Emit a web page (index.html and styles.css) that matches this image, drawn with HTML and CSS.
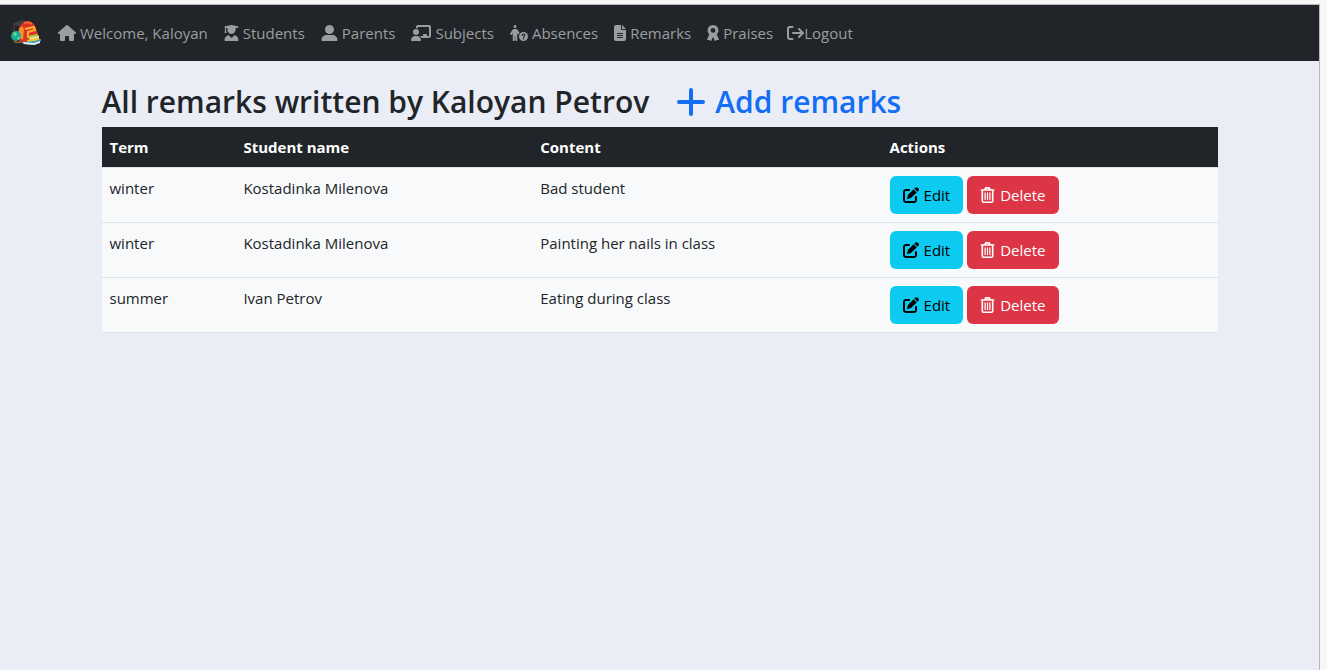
FILE: index.html
```html
<!DOCTYPE html>
<html lang="en">
<head>
<meta charset="utf-8">
<meta name="viewport" content="width=device-width, initial-scale=1">
<title>Remarks</title>
<link rel="stylesheet" href="styles.css">
</head>
<body>
<svg class="sprite" aria-hidden="true">
  <symbol id="edit" viewBox="0 0 512 512"><path d="M471.6 21.7c-21.9-21.9-57.3-21.9-79.2 0L362.3 51.7l97.9 97.9 30.1-30.1c21.9-21.9 21.9-57.3 0-79.2L471.6 21.7zm-299.2 220c-6.1 6.1-10.8 13.6-13.5 21.9l-29.6 88.8c-2.9 8.6-.6 18.1 5.8 24.6s15.9 8.7 24.6 5.8l88.8-29.6c8.2-2.7 15.7-7.4 21.9-13.5L437.7 172.3 339.7 74.3 172.4 241.7zM96 64C43 64 0 107 0 160V416c0 53 43 96 96 96H352c53 0 96-43 96-96V320c0-17.7-14.3-32-32-32s-32 14.3-32 32v96c0 17.7-14.3 32-32 32H96c-17.7 0-32-14.3-32-32V160c0-17.7 14.3-32 32-32h96c17.7 0 32-14.3 32-32s-14.3-32-32-32H96z"/></symbol>
  <symbol id="trash" viewBox="0 0 448 512"><path fill="none" stroke="currentColor" stroke-width="52" stroke-linecap="round" stroke-linejoin="round" d="M26 96H422M136 90l32-64H280l32 64M58 104V446q0 40 40 40H350q40 0 40-40V104"/><path fill="none" stroke="currentColor" stroke-width="40" stroke-linecap="round" d="M148 190V400M224 190V400M300 190V400"/></symbol>
</svg>
<div class="page">
  <nav class="navbar">
    <a class="brand" href="#" aria-label="Home">
      <svg viewBox="0 0 32 30" width="32" height="30">
        <path d="M2 6 11 2l9 2-9 5z" fill="#3a3c40"/><path d="M4 6v8" stroke="#55493d"/>
        <path d="M9 10q2-5 6-6 7-2 10 4l4 11-5 7-12-1-5-5z" fill="#dc3424"/>
        <path d="M9 11q3-5 5 0l-1 11-5-3z" fill="#f4922b"/>
        <path d="M15 11l9-2 1 3-7 2v5l8-1" fill="none" stroke="#ffb12f" stroke-width="2"/>
        <path d="M14 5q5-2 8 1" fill="none" stroke="#ff6337" stroke-width="2"/>
        <circle cx="6" cy="18" r="5" fill="#18a999"/><path d="M3 15q3-2 4 1l-2 3zM7 20l3-2-1 4z" fill="#6bdc77"/>
        <path d="M3 22q4 3 8 1v2H5z" fill="#9a6722"/>
        <path d="m19 18 8-2 2 2-9 3z" fill="#a9cf3f"/><path d="m19 20 10-2v2l-9 2z" fill="#f6e7aa"/>
        <path d="m17 22 12-2 1 2-12 3z" fill="#f1c928"/><path d="m12 24 13-1 6-2v2l-6 4-12-1z" fill="#389bc5"/><path d="m13 24 11 1 6-2v2l-6 2-10-1z" fill="#e4eceb"/>
      </svg>
    </a>
    <a class="nav-link" href="#"><svg class="icon" width="18" height="16" viewBox="0 0 576 512"><path d="M575.8 255.5c0 18-15 32.1-32 32.1h-32l.7 160.2c0 2.7-.2 5.4-.5 8.1V472c0 22.1-17.9 40-40 40H392c-22.1 0-40-17.9-40-40V384c0-17.7-14.3-32-32-32H256c-17.7 0-32 14.3-32 32v88c0 22.1-17.9 40-40 40H104c-22.1 0-40-17.9-40-40V287.6H32c-18 0-32-14-32-32.1 0-9 3-17 10-24L266.4 8c7-7 15-8 22-8s15 2 21 7L564.8 231.5c8 7 12 15 11 24z"/></svg><span>Welcome, Kaloyan</span></a>
    <a class="nav-link" href="#"><svg class="icon" width="15" height="16" viewBox="0 0 448 512"><path d="M219.3.5c3.1-.6 6.3-.6 9.4 0l200 40C439.9 42.7 448 52.6 448 64s-8.1 21.3-19.3 23.5L352 102.9V160c0 70.7-57.3 128-128 128S96 230.7 96 160V102.9L48 93.3v65.1l15.7 78.4c.9 4.7-.3 9.6-3.3 13.3S52.800 256 48 256H16c-4.800 0-9.300-2.100-12.400-5.900S-.7 241.500.3 236.800L16 158.400V86.600C6.500 83.300 0 74.300 0 64 0 52.600 8.100 42.700 19.300 40.500zM111.900 327.700c10.500-3.400 21.800.4 29.400 8.500l71 75.500c6.300 6.700 17 6.700 23.300 0l71-75.500c7.600-8.100 18.900-11.900 29.400-8.500C401 348.600 448 409.400 448 481.300c0 17-13.800 30.700-30.700 30.700H30.700C13.800 512 0 498.200 0 481.300c0-71.900 47-132.700 111.900-153.600z"/></svg><span>Students</span></a>
    <a class="nav-link" href="#"><svg class="icon" width="17" height="16" viewBox="0 0 512 512"><path d="M256 288A144 144 0 1 0 256 0a144 144 0 1 0 0 288zm-94.700 32C72.200 320 0 392.200 0 481.300c0 17 13.800 30.700 30.700 30.700H481.300c17 0 30.700-13.800 30.700-30.700C512 392.200 439.800 320 350.700 320H161.300z"/></svg><span>Parents</span></a>
    <a class="nav-link" href="#"><svg class="icon" width="20" height="16" viewBox="0 0 640 512"><path d="M160 64c0-35.300 28.700-64 64-64H576c35.300 0 64 28.700 64 64V352c0 35.300-28.700 64-64 64H336.800c-11.800-25.500-29.900-47.500-52.400-64H384V320c0-17.700 14.300-32 32-32h64c17.700 0 32 14.300 32 32v32h64V64H224v49.100C205.200 102.200 183.300 96 160 96V64zm0 64a96 96 0 1 1 0 192 96 96 0 1 1 0-192zM133.300 352h53.300C260.300 352 320 411.700 320 485.300c0 14.700-11.900 26.700-26.700 26.700H26.700C11.900 512 0 500.100 0 485.300 0 411.700 59.700 352 133.300 352z"/></svg><span>Subjects</span></a>
    <a class="nav-link" href="#"><svg class="icon" width="18" height="16" viewBox="0 0 576 512"><path d="M112 48a48 48 0 1 1 96 0 48 48 0 1 1-96 0zm40 304V480c0 17.700-14.300 32-32 32s-32-14.300-32-32V256.900L59.400 304.500c-9.100 15.100-28.800 20-43.900 10.900s-20-28.800-10.900-43.900l58.300-97c17.400-28.900 48.600-46.600 82.300-46.600h29.700c33.700 0 64.900 17.700 82.300 46.600l44.900 74.700c-16.100 17.600-28.600 38.500-36.600 61.500-1.900-1.800-3.500-3.900-4.900-6.300L232 256.900V480c0 17.700-14.300 32-32 32s-32-14.300-32-32V352z"/><circle cx="432" cy="368" r="144"/><path d="M386 338c0-60 92-58 92-8 0 34-44 30-44 62" fill="none" stroke="#212529" stroke-width="34" stroke-linecap="round"/><circle cx="433" cy="440" r="22" fill="#212529"/></svg><span>Absences</span></a>
    <a class="nav-link" href="#"><svg class="icon" width="12" height="16" viewBox="0 0 384 512"><path fill-rule="evenodd" d="M64 0C28.700 0 0 28.700 0 64V448c0 35.300 28.700 64 64 64H320c35.300 0 64-28.700 64-64V160H256c-17.700 0-32-14.300-32-32V0zm192 0v128h128zM112 256h160a16 16 0 0 1 0 32H112a16 16 0 0 1 0-32zm0 64h160a16 16 0 0 1 0 32H112a16 16 0 0 1 0-32zm0 64h160a16 16 0 0 1 0 32H112a16 16 0 0 1 0-32z"/></svg><span>Remarks</span></a>
    <a class="nav-link" href="#"><svg class="icon" width="12" height="16" viewBox="0 0 384 512"><path d="M68 310 2 460q-6 22 16 22l58-6 38 32q18 10 26-10l44-110h16l44 110q8 20 26 10l38-32 58 6q22 0 16-22l-66-150z"/><path fill-rule="evenodd" d="m192 0 49 12 54 6 24 48 42 36-5 54 15 50-31 44-16 50-52 16-42 32-38-10-38 10-42-32-52-16-16-50-31-44 15-50-5-54 42-36 24-48 54-6zm0 96a76 76 0 1 0 0 152 76 76 0 0 0 0-152z"/></svg><span>Praises</span></a>
    <a class="nav-link nav-link-tight" href="#"><svg class="icon" width="17" height="16" viewBox="0 0 544 512"><path d="M176 64H96q-64 0-64 64v256q0 64 64 64h80M192 256h304M384 128l128 128-128 128" fill="none" stroke="currentColor" stroke-width="64" stroke-linecap="round" stroke-linejoin="round"/></svg><span>Logout</span></a>
  </nav>
  <main class="container">
    <h1 class="title">All remarks written by Kaloyan Petrov <a class="add" href="#"><svg class="icon" width="28" height="28" viewBox="0 0 28 28"><path d="M14 2v24M2 14h24" fill="none" stroke="currentColor" stroke-width="4" stroke-linecap="round"/></svg>Add remarks</a></h1>
    <table class="table">
      <thead><tr><th class="col-term">Term</th><th class="col-name">Student name</th><th class="col-content">Content</th><th>Actions</th></tr></thead>
      <tbody>
        <tr><td>winter</td><td>Kostadinka Milenova</td><td>Bad student</td><td><div class="actions"><button class="btn btn-edit" type="button"><svg class="icon" width="16" height="16"><use href="#edit"/></svg>Edit</button><button class="btn btn-delete" type="button"><svg class="icon" width="15" height="16"><use href="#trash"/></svg>Delete</button></div></td></tr>
        <tr><td>winter</td><td>Kostadinka Milenova</td><td>Painting her nails in class</td><td><div class="actions"><button class="btn btn-edit" type="button"><svg class="icon" width="16" height="16"><use href="#edit"/></svg>Edit</button><button class="btn btn-delete" type="button"><svg class="icon" width="15" height="16"><use href="#trash"/></svg>Delete</button></div></td></tr>
        <tr><td>summer</td><td>Ivan Petrov</td><td>Eating during class</td><td><div class="actions"><button class="btn btn-edit" type="button"><svg class="icon" width="16" height="16"><use href="#edit"/></svg>Edit</button><button class="btn btn-delete" type="button"><svg class="icon" width="15" height="16"><use href="#trash"/></svg>Delete</button></div></td></tr>
      </tbody>
    </table>
  </main>
</div>
</body>
</html>
```
FILE: styles.css
```css
* { box-sizing: border-box; }
body {
  margin: 0;
  min-height: 100vh;
  display: flex;
  padding: 4px 7px 0 0;
  background: #f7f7f7;
  color: #212529;
  font: 15px/24px "Open Sans", "Noto Sans", sans-serif;
}
.sprite { display: none; }
.icon { fill: currentColor; flex: none; }
.page {
  flex: 1;
  min-width: 0;
  border-top: 1px solid #b9babc;
  border-right: 1px solid #b9babc;
  background: #eaedf5;
}
.navbar {
  display: flex;
  align-items: center;
  height: 56px;
  padding-left: 10px;
  background: #212529;
}
.brand { display: flex; margin-right: 8px; }
.nav-link {
  display: flex;
  align-items: center;
  gap: 4px;
  padding: 8px;
  color: #9b9d9e;
  text-decoration: none;
  white-space: nowrap;
}
.nav-link-tight { gap: 0; padding-left: 6px; }
.container {
  width: 100%;
  max-width: 1140px;
  margin: 0 auto;
  padding: 22px 12px;
}
.title {
  display: flex;
  flex-wrap: wrap;
  align-items: center;
  column-gap: 28px;
  margin: 0 0 6px;
  font-size: 30px;
  font-weight: 600;
  line-height: 38px;
}
.add {
  display: flex;
  align-items: center;
  gap: 10px;
  color: #146ef5;
  text-decoration: none;
}
.table {
  width: 100%;
  border-collapse: separate;
  border-spacing: 0;
  table-layout: fixed;
  background: #f8f9fa;
}
.table th, .table td { padding: 8px; text-align: left; vertical-align: top; }
.table th { background: #212529; color: #fff; font-weight: 700; }
.table td { border-bottom: 1px solid #dee2e6; }
.table tbody tr:first-child td { border-top: 1px solid #dee2e6; }
.col-term { width: 12%; }
.col-name { width: 26.6%; }
.col-content { width: 31.3%; }
.actions { display: flex; gap: 4px; }
.btn {
  display: flex;
  align-items: center;
  gap: 5px;
  height: 38px;
  padding: 0 13px;
  border: 0;
  border-radius: 6px;
  font: inherit;
  cursor: pointer;
}
.btn-edit { background: #0dcaf0; color: #000; }
.btn-delete { background: #dc3545; color: #fff; }
```
